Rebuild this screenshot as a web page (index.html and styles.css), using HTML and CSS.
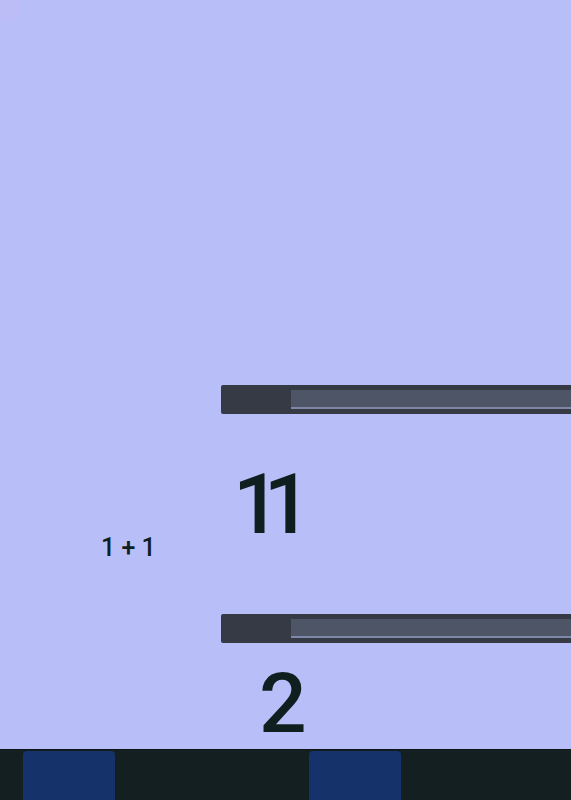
FILE: index.html
```html
<!DOCTYPE html>
<html lang="en">
<head>
    <meta charset="UTF-8">
    <meta name="viewport" content="width=device-width, initial-scale=1.0">
    <title>Calculator</title>
    <link rel="stylesheet" href="styles.css">
</head>
<body>
    <div class="screen">
        <div class="display">
            <div class="corner-mark"></div>

            <!-- Upper slider -->
            <div class="slider-row first-slider">
                <div class="slider">
                    <div class="slider-track"></div>
                </div>
            </div>

            <!-- Expression and first value -->
            <div class="value-row">
                <div class="expression">1 + 1</div>
                <div class="big-value first">11</div>
            </div>

            <!-- Lower slider -->
            <div class="slider-row">
                <div class="slider">
                    <div class="slider-track"></div>
                </div>
            </div>

            <div class="value-row">
                <div></div>
                <div class="big-value second">2</div>
            </div>
        </div>

        <!-- Bottom navigation -->
        <div class="nav-bar">
            <div class="nav-tab"></div>
            <div class="nav-tab"></div>
        </div>
    </div>
</body>
</html>
```

FILE: styles.css
```css
/* General Reset */
* {
    margin: 0;
    padding: 0;
    box-sizing: border-box;
}

body {
    font-family: Roboto, "Noto Sans", Arial, sans-serif;
    background-color: #b8bff8;
    color: #0f1e1f;
}

/* Screen */
.screen {
    width: 571px;
    height: 800px;
    display: flex;
    flex-direction: column;
    overflow: hidden;
}

.display {
    flex: 1;
    display: flex;
    flex-direction: column;
}

.corner-mark {
    width: 20px;
    height: 20px;
    background-color: #bcbcf7;
}

/* Sliders */
.slider-row {
    padding-left: 221px;
}

.first-slider {
    margin-top: 365px;
}

.slider {
    height: 29px;
    background-color: #353a44;
    border-radius: 2px 0 0 2px;
    padding: 5px 0 5px 70px;
}

.slider-track {
    height: 19px;
    background-color: #4e5567;
    border-bottom: 2px solid #7f87a6;
}

/* Values */
.value-row {
    display: grid;
    grid-template-columns: 221px 1fr;
}

.expression {
    font-size: 25px;
    font-weight: 500;
    line-height: 1;
    padding-left: 101px;
    padding-top: 121px;
}

.big-value {
    font-size: 84px;
    font-weight: 500;
    line-height: 1;
}

.big-value.first {
    margin-top: 49px;
    margin-left: 12px;
    height: 151px;
    letter-spacing: -17px;
}

.big-value.second {
    margin-top: 19px;
    margin-left: 38px;
}

/* Navigation */
.nav-bar {
    flex-shrink: 0;
    height: 51px;
    background-color: #131f20;
    border-top: 1px solid #0c1516;
    display: flex;
    padding: 1px 0 0 23px;
    gap: 194px;
}

.nav-tab {
    width: 92px;
    background-color: #15336a;
    border-radius: 4px 4px 0 0;
}
```
